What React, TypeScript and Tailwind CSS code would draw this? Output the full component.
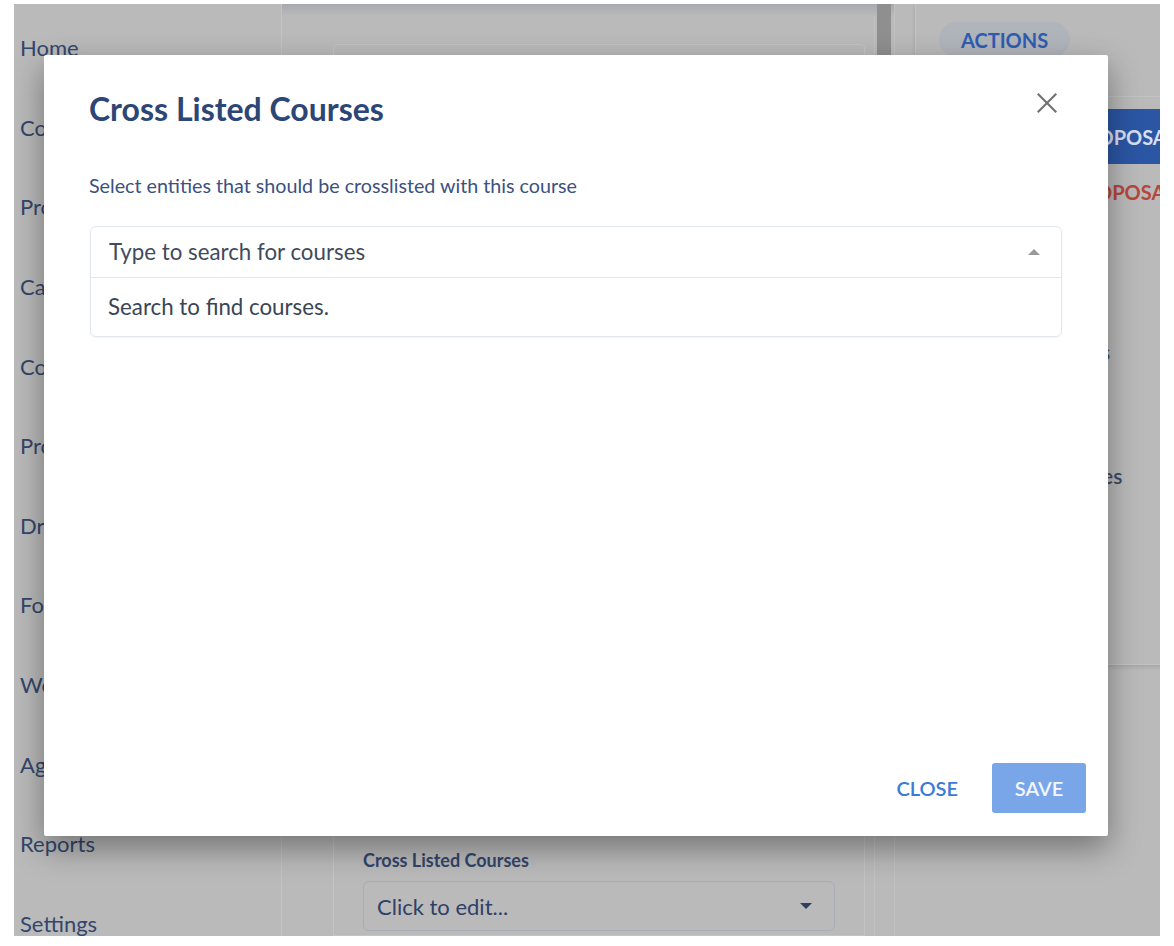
const NAV_ITEMS = [
  'Home',
  'Courses',
  'Programs',
  'Catalog',
  'Committees',
  'Proposals',
  'Drafts',
  'Forms',
  'Workflows',
  'Agendas',
  'Reports',
  'Settings',
];

const font = { fontFamily: 'Lato, "Open Sans", sans-serif' };

const CloseIcon = () => (
  <svg viewBox="0 0 20 20" width="20" height="20" fill="none" stroke="currentColor" strokeWidth={2.1} strokeLinecap="square">
    <line x1="1.5" y1="1.5" x2="18.5" y2="18.5" />
    <line x1="18.5" y1="1.5" x2="1.5" y2="18.5" />
  </svg>
);

export default function App() {
  return (
    <div className="w-[1174px] h-[946px] bg-white pt-[4px] pl-[14px]" style={font}>
      <div className="relative w-[1146px] h-[932px] overflow-hidden bg-[#bababa] flex">
        {/* side navigation */}
        <nav className="w-[268px] shrink-0 border-r border-[#c3c3c3] pt-[4px] pl-[6px] flex flex-col">
          {NAV_ITEMS.map((item) => (
            <div key={item} className="h-[79.6px] shrink-0 flex items-center text-[22px] text-[#33466c]">
              {item}
            </div>
          ))}
        </nav>

        {/* main column */}
        <main className="w-[613px] shrink-0 flex flex-col">
          <div className="h-[12px] bg-gradient-to-b from-[#a7a9ae] to-[#bababa]" />
          <div className="flex-1 flex">
            <div className="w-[51px] shrink-0" />
            <div className="mt-[28px] w-[532px] shrink-0 border border-[#c2c4c6] rounded-t-[4px] flex flex-col justify-end px-[29px] pb-[4px]">
              <div className="text-[18px] font-bold text-[#33456a] mb-[7px]">Cross Listed Courses</div>
              <div className="h-[50px] border border-[#a9aeb6] rounded-[6px] flex items-center justify-between pl-[13px] pr-[22px] text-[22px] text-[#2f4068]">
                <span>Click to edit...</span>
                <span className="w-0 h-0 border-x-[6px] border-x-transparent border-t-[6px] border-t-[#2f3f5f]" />
              </div>
            </div>
            <div className="w-[10px] shrink-0 border-r border-[#c2c2c2]" />
            <div className="w-[20px] shrink-0 border-r border-[#c2c2c2] pl-[2px] pr-[3px] -mt-[12px]">
              <div className="h-[420px] bg-[#8f8f8f]" />
            </div>
          </div>
        </main>

        {/* right actions panel */}
        <aside className="flex-1 flex flex-col pl-[20px]">
          <div className="h-[661px] border-l border-b border-[#c4c4c4] shadow-[0_2px_4px_rgba(0,0,0,0.12)] flex flex-col">
            <div className="h-[93px] shrink-0 border-b border-[#c4c4c4] pl-[23px] pt-[18px]">
              <span className="inline-flex items-center h-[35px] px-[22px] rounded-full bg-[#b0b4bb] text-[20px] font-bold text-[#2f5cb0]">
                ACTIONS
              </span>
            </div>
            <div className="mt-[12px] h-[55px] shrink-0 bg-[#2b56a4] flex items-center pl-[78px] text-[20px] font-bold text-[#d6def0] whitespace-nowrap">
              CREATE PROPOSAL
            </div>
            <div className="mt-[16px] pl-[78px] text-[20px] leading-[1.2] font-bold text-[#b5473c] whitespace-nowrap">
              DELETE PROPOSAL
            </div>
            <div className="mt-[135px] pl-[38px] text-[21px] leading-[1.2] font-semibold text-[#3c4a66] whitespace-nowrap">
              Linked Proposals
            </div>
            <div className="mt-[99px] pl-[37px] text-[21px] leading-[1.2] font-semibold text-[#3c4a66] whitespace-nowrap">
              Related Resources
            </div>
          </div>
        </aside>

        {/* modal */}
        <div className="absolute left-[30px] top-[51px] w-[1064px] h-[781px] bg-white rounded-[2px] shadow-[0_12px_32px_rgba(0,0,0,0.38)] flex flex-col">
          <header className="flex items-start justify-between pl-[45px] pr-[51px] pt-[35px]">
            <h2 className="text-[32px] leading-[1.2] font-bold text-[#2c4676]">Cross Listed Courses</h2>
            <button type="button" className="mt-[3px] text-[#727272]">
              <CloseIcon />
            </button>
          </header>

          <p className="pl-[45px] mt-[46px] text-[19.7px] leading-[1.2] text-[#3b5180]">
            Select entities that should be crosslisted with this course
          </p>

          <div className="ml-[46px] mr-[46px] mt-[28px] border border-[#e2e7ee] rounded-[6px] shadow-[0_1px_2px_rgba(0,0,0,0.05)]">
            <div className="h-[51px] border-b border-[#e2e7ee] flex items-center justify-between pl-[18px] pr-[21px]">
              <span className="text-[22.3px] text-[#3f4b5c]">Type to search for courses</span>
              <span className="w-0 h-0 border-x-[6.5px] border-x-transparent border-b-[6px] border-b-[#9a9a9a]" />
            </div>
            <div className="h-[58px] flex items-center pl-[17px] pb-[1px] text-[22.3px] text-[#3a4656]">
              Search to find courses.
            </div>
          </div>

          <footer className="mt-auto flex items-center justify-end gap-[18px] pr-[22px] pb-[23px]">
            <button type="button" className="h-[50px] px-[16px] text-[20px] font-semibold text-[#3a7bd8]">
              CLOSE
            </button>
            <button
              type="button"
              className="h-[50px] w-[94px] rounded-[3px] bg-[#78a6e8] text-[20px] font-semibold text-[#f2f6fd]"
            >
              SAVE
            </button>
          </footer>
        </div>
      </div>
    </div>
  );
}
